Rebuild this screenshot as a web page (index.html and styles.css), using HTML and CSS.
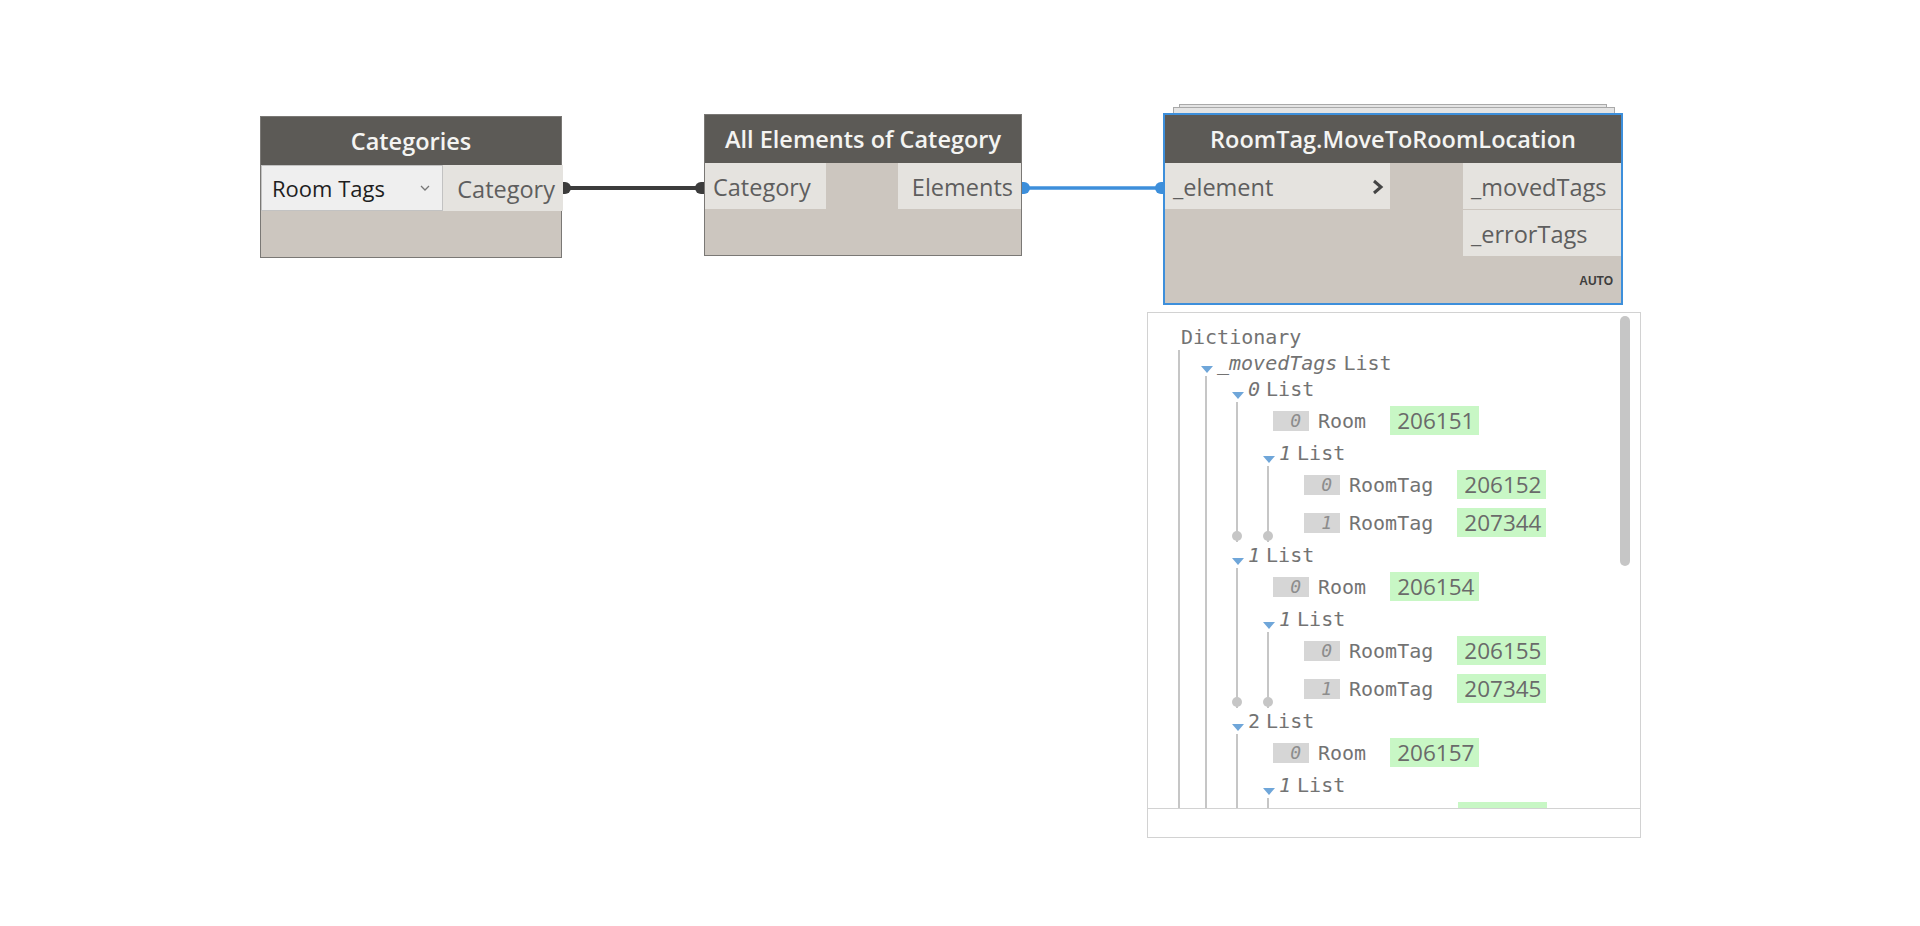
FILE: index.html
```html
<!DOCTYPE html>
<html lang="en">
<head>
  <meta charset="UTF-8">
  <meta name="viewport" content="width=device-width, initial-scale=1.0">
  <title>Room Tags Graph</title>
  <link rel="stylesheet" href="styles.css">
</head>
<body>
  <main class="canvas">
    <!-- connectors between node ports -->
    <svg class="wires" width="1920" height="926" viewBox="0 0 1920 926">
      <line x1="565" y1="188" x2="701" y2="188" stroke="#3c3c3c" stroke-width="4"/>
      <path d="M562 182 h3 a6 6 0 0 1 0 12 h-3 z" fill="#3c3c3c"/>
      <path d="M704 182 h-3 a6 6 0 0 0 0 12 h3 z" fill="#3c3c3c"/>
      <line x1="1025" y1="188" x2="1160" y2="188" stroke="#3d8fdb" stroke-width="3.5"/>
      <path d="M1021 182 h3 a6 6 0 0 1 0 12 h-3 z" fill="#3d8fdb"/>
      <path d="M1164 182 h-3 a6 6 0 0 0 0 12 h3 z" fill="#3d8fdb"/>
    </svg>

    <div class="node node-categories">
      <div class="node-header">Categories</div>
      <div class="node-ports">
        <div class="port-col">
          <div class="dropdown">
            <span>Room Tags</span>
            <svg width="10" height="6" viewBox="0 0 10 6"><path d="M1 1 L5 5 L9 1" fill="none" stroke="#777" stroke-width="1.3"/></svg>
          </div>
        </div>
        <div class="port-col">
          <div class="port port-out">Category</div>
        </div>
      </div>
    </div>

    <div class="node node-elements">
      <div class="node-header">All Elements of Category</div>
      <div class="node-ports">
        <div class="port-col">
          <div class="port port-in">Category</div>
        </div>
        <div class="port-col">
          <div class="port port-out">Elements</div>
        </div>
      </div>
    </div>

    <div class="stack-card stack-back"></div>
    <div class="stack-card stack-mid"></div>
    <div class="node node-movetag selected">
      <div class="node-header">RoomTag.MoveToRoomLocation</div>
      <div class="node-ports">
        <div class="port-col">
          <div class="port port-in port-wide">
            <span>_element</span>
            <svg width="12" height="16" viewBox="0 0 12 16"><path d="M2 2 L9 8 L2 14" fill="none" stroke="#444" stroke-width="3"/></svg>
          </div>
        </div>
        <div class="port-col outputs">
          <div class="port port-out port-left">_movedTags</div>
          <div class="port port-out port-left">_errorTags</div>
        </div>
      </div>
      <div class="node-footer">AUTO</div>
    </div>

    <section class="preview">
      <div class="tree">
        <div class="branch root">
          <div class="label">Dictionary</div>
          <div class="children">
            <div class="branch">
              <div class="label"><span class="caret"></span><i>_movedTags</i>List</div>
              <div class="children">
                <div class="branch">
                  <div class="label"><span class="caret"></span><i>0</i>List</div>
                  <div class="children">
                    <div class="item"><span class="idx">0</span><span class="type">Room</span><span class="val">206151</span></div>
                    <div class="branch">
                      <div class="label"><span class="caret"></span><i>1</i>List</div>
                      <div class="children">
                        <div class="item"><span class="idx">0</span><span class="type">RoomTag</span><span class="val">206152</span></div>
                        <div class="item"><span class="idx">1</span><span class="type">RoomTag</span><span class="val">207344</span></div>
                      </div>
                    </div>
                  </div>
                </div>
                <div class="branch">
                  <div class="label"><span class="caret"></span><i>1</i>List</div>
                  <div class="children">
                    <div class="item"><span class="idx">0</span><span class="type">Room</span><span class="val">206154</span></div>
                    <div class="branch">
                      <div class="label"><span class="caret"></span><i>1</i>List</div>
                      <div class="children">
                        <div class="item"><span class="idx">0</span><span class="type">RoomTag</span><span class="val">206155</span></div>
                        <div class="item"><span class="idx">1</span><span class="type">RoomTag</span><span class="val">207345</span></div>
                      </div>
                    </div>
                  </div>
                </div>
                <div class="branch">
                  <div class="label"><span class="caret"></span><b>2</b>List</div>
                  <div class="children">
                    <div class="item"><span class="idx">0</span><span class="type">Room</span><span class="val">206157</span></div>
                    <div class="branch">
                      <div class="label"><span class="caret"></span><i>1</i>List</div>
                      <div class="children">
                        <div class="item item-clipped"><span class="val"></span></div>
                      </div>
                    </div>
                  </div>
                </div>
              </div>
            </div>
          </div>
        </div>
        <div class="scrollbar"></div>
      </div>
      <div class="preview-footer"></div>
    </section>
  </main>
</body>
</html>
```

FILE: styles.css
```css
* {
  margin: 0;
  padding: 0;
  box-sizing: border-box;
}

body {
  background: #fff;
  font-family: "Open Sans", "Noto Sans", sans-serif;
}

.canvas {
  position: relative;
  width: 1920px;
  height: 926px;
  overflow: hidden;
  background: #fff;
}

.wires {
  position: absolute;
  left: 0;
  top: 0;
}

/* nodes */

.node {
  position: absolute;
  display: flex;
  flex-direction: column;
  background: #ccc6bf;
  border: 1px solid #7a7875;
}

.node-categories {
  left: 260px;
  top: 116px;
  width: 302px;
  height: 142px;
}

.node-elements {
  left: 704px;
  top: 114px;
  width: 318px;
  height: 142px;
}

.node-movetag {
  left: 1163px;
  top: 113px;
  width: 460px;
  height: 192px;
}

.node.selected {
  border: 2px solid #3d8fdb;
}

.node-header {
  height: 48px;
  flex-shrink: 0;
  background: #5c5a56;
  color: #f4f4f2;
  font-size: 23.5px;
  font-weight: 600;
  line-height: 48px;
  text-align: center;
  white-space: nowrap;
}

.node-ports {
  display: flex;
  justify-content: space-between;
  align-items: flex-start;
}

.port-col {
  display: flex;
  flex-direction: column;
  gap: 1px;
}

.port {
  height: 46px;
  display: flex;
  align-items: center;
  padding: 1px 8px 0;
  background: #e5e3df;
  color: #5e5e5e;
  font-size: 23.5px;
  white-space: nowrap;
}

.port-out {
  justify-content: flex-end;
}

.port-left {
  justify-content: flex-start;
}

.node-elements .port-in {
  width: 121px;
}

.node-elements .port-out {
  width: 123px;
}

.node-categories .port-out {
  width: 120px;
}

.port-wide {
  width: 225px;
  justify-content: space-between;
  padding-right: 6px;
}

.outputs .port {
  width: 158px;
}

.dropdown {
  width: 182px;
  height: 46px;
  display: flex;
  align-items: center;
  justify-content: space-between;
  padding: 0 12px 0 10px;
  background: #efefef;
  border: 1px solid #c2c2c2;
  color: #1e1e1e;
  font-size: 22px;
}

.node-footer {
  margin-top: auto;
  padding: 0 8px 15px 0;
  text-align: right;
  color: #3e3e3e;
  font-family: "Liberation Sans", sans-serif;
  font-size: 12px;
  font-weight: 700;
}

/* stacked copies behind the selected node */

.stack-card {
  position: absolute;
  height: 40px;
  background: #e4e4e4;
  border: 1px solid #a9a9a9;
}

.stack-back {
  left: 1179px;
  top: 104px;
  width: 428px;
}

.stack-mid {
  left: 1173px;
  top: 107px;
  width: 442px;
}

/* watch preview */

.preview {
  position: absolute;
  left: 1147px;
  top: 312px;
  width: 494px;
  height: 526px;
  display: flex;
  flex-direction: column;
  background: #fff;
  border: 1px solid #d2d2d2;
}

.tree {
  position: relative;
  flex: 1;
  overflow: hidden;
  padding: 11px 0 0 30px;
  font-family: "DejaVu Sans Mono", "Liberation Mono", monospace;
  font-size: 20px;
  color: #737373;
}

.preview-footer {
  height: 29px;
  border-top: 1px solid #d2d2d2;
}

.scrollbar {
  position: absolute;
  right: 10px;
  top: 3px;
  width: 10px;
  height: 250px;
  border-radius: 5px;
  background: #c6c6c6;
}

.label {
  height: 26px;
  display: flex;
  align-items: center;
  white-space: nowrap;
}

.root > .label {
  padding-left: 3px;
}

.label i,
.label b {
  margin-right: 6px;
  font-weight: 400;
}

.label i {
  font-style: italic;
}

.caret {
  width: 12px;
  height: 26px;
  margin-right: 4px;
  position: relative;
}

.caret::before {
  content: "";
  position: absolute;
  left: 0;
  top: 16px;
  border-left: 6px solid transparent;
  border-right: 6px solid transparent;
  border-top: 7px solid #6fa6d9;
}

.children {
  position: relative;
  margin-left: 4px;
  padding-left: 25px;
  border-left: 2px solid #c6c6c6;
}

.root > .children {
  margin-left: 0;
  padding-left: 21px;
}

/* closed lists end in a dot */
.branch .branch .branch .children::after {
  content: "";
  position: absolute;
  left: -6px;
  bottom: 1px;
  width: 10px;
  height: 10px;
  border-radius: 50%;
  background: #c6c6c6;
}

.item {
  height: 38px;
  display: flex;
  align-items: center;
  padding-bottom: 5px;
  padding-top: 4px;
  margin-left: 10px;
  white-space: nowrap;
}

.item-clipped {
  padding-left: 154px;
}

.idx {
  width: 36px;
  height: 20px;
  padding-right: 8px;
  background: #d6d6d6;
  color: #8d8d8d;
  font-size: 18px;
  font-style: italic;
  line-height: 20px;
  text-align: right;
}

.type {
  margin-left: 9px;
  margin-right: 24px;
}

.val {
  width: 89px;
  height: 29px;
  padding-left: 7px;
  background: #c8f7c5;
  color: #6a6a6a;
  font-family: "Open Sans", sans-serif;
  font-size: 22.5px;
  line-height: 29px;
}
```
